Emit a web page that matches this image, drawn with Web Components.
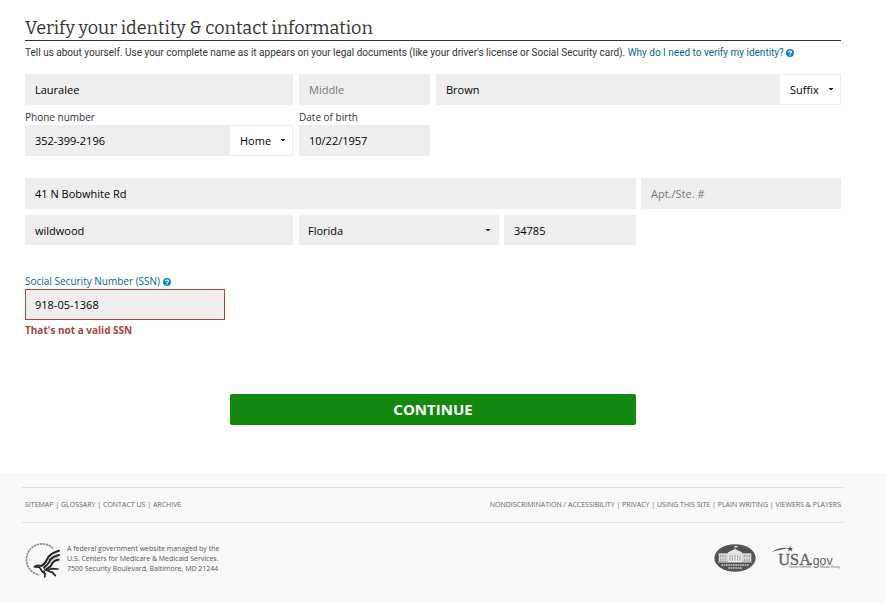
<!DOCTYPE html>
<html lang="en">
<head>
<meta charset="utf-8">
<meta name="viewport" content="width=device-width, initial-scale=1">
<title>Verify your identity &amp; contact information</title>
<style>
body { margin: 0; background: #fff; color: #333; font: 10px/14px "Open Sans", sans-serif; }
</style>
</head>
<body>
<identity-page></identity-page>
<script>
const define = (name, html, setup) => {
  const template = document.createElement("template");
  template.innerHTML = html;
  customElements.define(name, class extends HTMLElement {
    constructor() {
      super();
      this.attachShadow({ mode: "open" }).append(template.content.cloneNode(true));
    }
    connectedCallback() { if (setup) setup(this, this.shadowRoot); }
  });
};

define("help-icon", `
<style>:host { display: inline-block; width: 8px; height: 8px; vertical-align: -1px; } svg { display: block; }</style>
<svg width="8" height="8" viewBox="0 0 16 16" aria-hidden="true">
  <circle cx="8" cy="8" r="8" fill="#0d86bd"/>
  <path d="M5 6.6C5 3.2 11 3.2 11 6.2C11 8.4 8 7.8 8 9.6" fill="none" stroke="#fff" stroke-width="2.4"/>
  <circle cx="8" cy="12" r="1.4" fill="#fff"/>
</svg>`);

define("section-title", `
<style>
:host { display: block; border-bottom: 1px solid #333; }
h1 { margin: 0; font: 400 18px/24px Bitter, "DejaVu Serif Condensed", "DejaVu Serif", serif; color: #333; }
</style>
<h1><slot></slot></h1>`);

define("form-row", `
<style>:host { display: grid; gap: 6px; align-items: end; }</style><slot></slot>`);

define("text-field", `
<style>
:host { display: block; min-width: 0; }
label { display: block; height: 15px; line-height: 14px; }
label[hidden] { display: none; }
.box { display: flex; background: #eee; border: 1px solid #eee; height: var(--field-height, 29px); }
:host([invalid]) .box { border-color: #ac4142; }
input { flex: 1; min-width: 0; padding: 0 9px; border: 0; background: transparent; color: #000; font: 11px "Open Sans", sans-serif; outline: 0; }
input::placeholder { color: #757575; opacity: 1; }
</style>
<label for="field"><slot name="label"></slot></label>
<div class="box"><input id="field" type="text"><slot name="addon"></slot></div>
<slot name="error"></slot>`, (host, root) => {
  const input = root.querySelector("input");
  input.value = host.getAttribute("value") || "";
  input.placeholder = host.getAttribute("placeholder") || "";
  const name = host.getAttribute("name-label");
  if (name) { input.setAttribute("aria-label", name); root.querySelector("label").hidden = true; }
  if (host.hasAttribute("invalid")) input.setAttribute("aria-invalid", "true");
});

define("select-field", `
<style>
:host { display: grid; align-items: center; background: #fff; min-width: 0; }
select { grid-area: 1 / 1; width: 100%; height: 100%; margin: 0; padding: 0 16px 0 10px; border: 0; border-radius: 0; appearance: none; background: transparent; color: #000; font: 11px "Open Sans", sans-serif; outline: 0; }
svg { grid-area: 1 / 1; justify-self: end; margin-right: 7px; pointer-events: none; }
:host([filled]) { background: #eee; height: 30px; }
:host([filled]) select { padding-left: 9px; }
:host([filled]) svg { margin-right: 9px; }
</style>
<select></select>
<svg width="4" height="3" viewBox="0 0 4 3" aria-hidden="true"><path d="M0 0H4V1H3V2H1V1H0Z" fill="#222"/></svg>`, (host, root) => {
  const select = root.querySelector("select");
  select.replaceChildren(new Option(host.getAttribute("value")));
  select.setAttribute("aria-label", host.getAttribute("name-label"));
});

define("submit-button", `
<style>
:host { display: block; }
button { display: block; width: 100%; height: 31px; padding: 0 0 2px; border: 0; border-radius: 2px; background: #12890e; color: #fff; font: 700 15px "Open Sans", sans-serif; cursor: pointer; }
</style>
<button type="button"><slot></slot></button>`);

define("link-list", `
<style>
:host { display: block; font-size: 7px; line-height: 10px; color: #666; }
::slotted(a) { color: inherit; text-decoration: none; }
</style><nav><slot></slot></nav>`);

define("hhs-seal", `
<style>:host { display: block; } svg { display: block; }</style>
<svg width="36" height="36" viewBox="0 0 108 108" role="img" aria-label="Department of Health and Human Services">
  <g fill="none" stroke-linecap="round">
    <path d="M84 16A47 47 0 1 0 43 96" stroke="#8c8c8c" stroke-width="5" stroke-dasharray="7 2" stroke-linecap="butt"/>
    <path d="M102 23C80 29 70 38 66 49C63 58 57 64 49 69M102 36C84 40 75 48 72 57C69 65 63 70 57 74M101 50C91 51 83 56 80 64C77 71 71 75 65 78" stroke="#222" stroke-width="6"/>
    <path d="M98 28C83 32 74 40 70 50M98 42C86 45 79 52 76 60" stroke="#777" stroke-width="2"/>
    <path d="M49 69C41 66 33 67 29 71L42 73C50 77 47 82 53 87L61 92M60 79C66 85 72 82 79 77L99 78M57 84C58 91 62 96 59 102M69 84L82 88L91 98" stroke="#252525" stroke-width="5"/>
  </g>
</svg>`);

define("white-house-seal", `
<style>:host { display: block; } svg { display: block; }</style>
<svg width="42" height="28" viewBox="0 0 126 84" role="img" aria-label="The White House, Washington">
  <ellipse cx="63" cy="42" rx="62" ry="41.5" fill="#505050"/>
  <ellipse cx="63" cy="42" rx="58" ry="37.5" fill="none" stroke="#6a6a6a" stroke-width="1.5"/>
  <path d="M62 5H64V15H62Z M64 6H71V10H64Z M42 25L63 15L84 25V29H42Z" fill="#e8e8e8"/>
  <path d="M14 28H112V53H14Z" fill="#d7d7d7"/>
  <path d="M43 29H83V54H43Z" fill="#f2f2f2"/>
  <path d="M20 33V39M27 33V39M34 33V39M20 44V50M27 44V50M34 44V50M92 33V39M99 33V39M106 33V39M92 44V50M99 44V50M106 44V50M48 32V51M55 32V51M63 32V51M71 32V51M78 32V51" stroke="#959595" stroke-width="3"/>
  <path d="M12 54H114V57H12Z" fill="#999"/>
  <path d="M22 63H104M43 72H83" stroke="#ccc" stroke-width="4" stroke-dasharray="5 2"/>
</svg>`);

define("usa-gov-logo", `
<style>:host { display: block; } svg { display: block; }</style>
<svg width="69" height="24" viewBox="0 0 207 72" role="img" aria-label="USA.gov Government Made Easy">
  <path d="M0 17C17 7 34 3 52 7C37 8 20 12 7 16Z" fill="#555"/>
  <path d="M54 0L57 6L63 6L59 10L61 16L55 12L48 16L50 10L46 6L52 6Z" fill="#555"/>
  <text x="19" y="56" font-family="Liberation Serif, serif" font-size="49" fill="#606060" stroke="#606060">USA</text>
  <text x="112" y="56" font-family="Liberation Sans, sans-serif" font-size="37" fill="#606060"><tspan font-weight="700">.</tspan>gov</text>
  <text x="51" y="67" font-family="Liberation Sans, sans-serif" font-size="12" fill="#707070">Government</text>
  <text x="144" y="67" font-family="Liberation Sans, sans-serif" font-size="12" fill="#707070">Made Easy</text>
</svg>`);

define("site-footer", `
<style>
:host { display: block; flex: 1; background: #f8f8f8; color: #666; padding: 14px 42px 23px 22px; }
.links { display: flex; justify-content: space-between; align-items: center; border: solid #e0e0e0; border-width: 1px 0; padding: 12px 3px; }
.bottom { display: flex; align-items: flex-start; padding: 20px 3px 0; }
address { margin: 1px 0 0 6px; font: 7px/10px "Open Sans", sans-serif; color: #555; }
.marks { display: flex; align-items: center; gap: 16px; height: 30px; margin-left: auto; }
</style>
<footer>
  <div class="links">
    <link-list><a href="#">SITEMAP</a> | <a href="#">GLOSSARY</a> | <a href="#">CONTACT US</a> | <a href="#">ARCHIVE</a></link-list>
    <link-list><a href="#">NONDISCRIMINATION / ACCESSIBILITY</a> | <a href="#">PRIVACY</a> | <a href="#">USING THIS SITE</a> | <a href="#">PLAIN WRITING</a> | <a href="#">VIEWERS &amp; PLAYERS</a></link-list>
  </div>
  <div class="bottom">
    <hhs-seal></hhs-seal>
    <address>A federal government website managed by the<br>U.S. Centers for Medicare &amp; Medicaid Services.<br>7500 Security Boulevard, Baltimore, MD 21244</address>
    <div class="marks"><white-house-seal></white-house-seal><usa-gov-logo></usa-gov-logo></div>
  </div>
</footer>`);

define("identity-page", `
<style>
:host { display: flex; flex-direction: column; min-height: 100vh; }
main { padding: 16px 45px 48px 25px; }
.intro { margin: 5px 0 14px; font-family: Roboto, "Open Sans", sans-serif; }
a { color: #046791; text-decoration: none; }
.name, .contact { grid-template-columns: 268fr 131fr 405fr; }
.contact { margin-top: 5px; }
.street { grid-template-columns: 611fr 200fr; gap: 5px; margin-top: 22px; }
.city { grid-template-columns: 269fr 200fr 132fr 200fr; gap: 5px; margin-top: 6px; --field-height: 28px; }
.ssn { grid-template-columns: 200fr 616fr; gap: 0; margin-top: 29px; }
.city text-field:first-child { margin-right: 1px; }
.suffix { width: 60px; }
.phone { width: 62px; }
.error { margin: 3px 0 0; font-weight: 700; color: #ac4142; }
.actions { display: grid; grid-template-columns: 205fr 406fr 205fr; margin-top: 57px; }
submit-button { grid-column: 2; }
</style>
<main>
  <section-title>Verify your identity &amp; contact information</section-title>
  <p class="intro">Tell us about yourself. Use your complete name as it appears on your legal documents (like your driver's license or Social Security card). <a href="#">Why do I need to verify my identity? <help-icon></help-icon></a></p>
  <form>
    <form-row class="name">
      <text-field name-label="First name" value="Lauralee"></text-field>
      <text-field name-label="Middle name" placeholder="Middle"></text-field>
      <text-field name-label="Last name" value="Brown"><select-field class="suffix" slot="addon" name-label="Suffix" value="Suffix"></select-field></text-field>
    </form-row>
    <form-row class="contact">
      <text-field value="352-399-2196"><span slot="label">Phone number</span><select-field class="phone" slot="addon" name-label="Phone type" value="Home"></select-field></text-field>
      <text-field value="10/22/1957"><span slot="label">Date of birth</span></text-field>
    </form-row>
    <form-row class="street">
      <text-field name-label="Street address" value="41 N Bobwhite Rd"></text-field>
      <text-field name-label="Apartment or suite number" placeholder="Apt./Ste. #"></text-field>
    </form-row>
    <form-row class="city">
      <text-field name-label="City" value="wildwood"></text-field>
      <select-field filled name-label="State" value="Florida"></select-field>
      <text-field name-label="ZIP code" value="34785"></text-field>
    </form-row>
    <form-row class="ssn">
      <text-field invalid value="918-05-1368"><a slot="label" href="#">Social Security Number (SSN) <help-icon></help-icon></a><p class="error" slot="error">That's not a valid SSN</p></text-field>
    </form-row>
    <div class="actions"><submit-button>CONTINUE</submit-button></div>
  </form>
</main>
<site-footer></site-footer>`);
</script>
</body>
</html>
